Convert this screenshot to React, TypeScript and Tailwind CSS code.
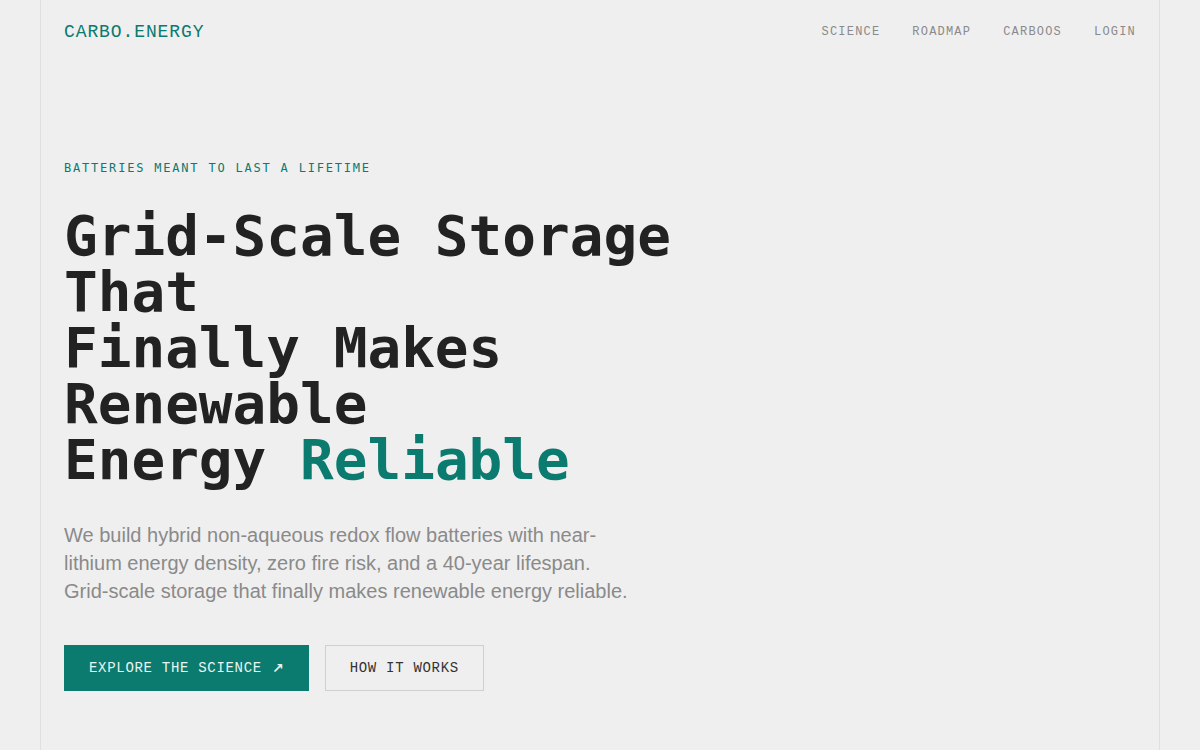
const navLinks = ['Science', 'Roadmap', 'CarbOOS', 'Login'];

function Header() {
  return (
    <header className="flex items-center justify-between px-[23px] pt-[18px] pb-5">
      <a href="#" className="font-['Liberation_Mono',monospace] text-lg tracking-wider text-[#0b7a6f]">
        CARBO.ENERGY
      </a>
      <nav className="flex items-center gap-8">
        {navLinks.map((link) => (
          <a
            key={link}
            href="#"
            className="font-['Liberation_Mono',monospace] text-xs uppercase tracking-widest text-[#8a8a8a]"
          >
            {link}
          </a>
        ))}
      </nav>
    </header>
  );
}

function Hero() {
  return (
    <section className="px-[23px] pt-[94px] pb-16">
      <p className="font-['DejaVu_Sans_Mono',monospace] text-xs tracking-[0.15em] text-[#0b7a6f]">
        BATTERIES MEANT TO LAST A LIFETIME
      </p>
      <h1 className="mt-[32px] max-w-[720px] font-['DejaVu_Sans_Mono',monospace] text-[56px] font-bold leading-none text-[#222222]">
        Grid-Scale Storage That
        <br />
        Finally Makes Renewable
        <br />
        Energy <span className="text-[#0b7a6f]">Reliable</span>
      </h1>
      <p className="mt-[33px] max-w-xl font-['Liberation_Sans',sans-serif] text-xl leading-7 text-[#8a8a8a]">
        We build hybrid non-aqueous redox flow batteries with near-lithium energy density, zero fire
        risk, and a 40-year lifespan. Grid-scale storage that finally makes renewable energy reliable.
      </p>
      <div className="mt-[40px] flex items-center gap-4">
        <a
          href="#"
          className="flex items-center gap-[10px] border border-[#0b7a6f] bg-[#0b7a6f] px-6 py-3 font-['Liberation_Mono',monospace] text-sm tracking-wider text-[#e8f5f2]"
        >
          EXPLORE THE SCIENCE
          <span className="font-['DejaVu_Sans',sans-serif] font-bold tracking-normal">↗</span>
        </a>
        <a
          href="#"
          className="border border-[#cfcfcf] px-6 py-3 font-['Liberation_Mono',monospace] text-sm tracking-wider text-[#333333]"
        >
          HOW IT WORKS
        </a>
      </div>
    </section>
  );
}

export default function App() {
  return (
    <div className="min-h-screen bg-[#efefef]">
      <div className="mx-auto min-h-screen max-w-[1120px] border-x border-[#e0e0e0]">
        <Header />
        <Hero />
      </div>
    </div>
  );
}
